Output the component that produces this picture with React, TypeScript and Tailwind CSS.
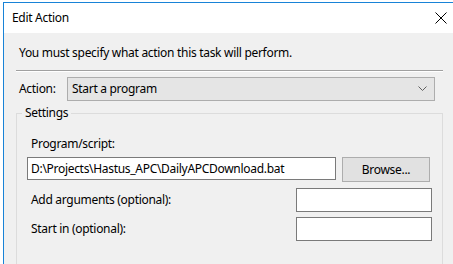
import React from "react";

const font = { fontFamily: '"Noto Sans", "Open Sans", sans-serif' };

function Chevron() {
  return (
    <svg width="9" height="6" viewBox="0 0 9 6" className="text-[#606060]">
      <path d="M0.5 0.5 L4.5 4.5 L8.5 0.5" fill="none" stroke="currentColor" strokeWidth="1" />
    </svg>
  );
}

function CloseX() {
  return (
    <svg width="12" height="12" viewBox="0 0 12 12">
      <path d="M0.5 0.5 L11.5 11.5 M11.5 0.5 L0.5 11.5" stroke="#000" strokeWidth="1" />
    </svg>
  );
}

export default function App() {
  return (
    <div
      className="w-[453px] h-[264px] overflow-hidden bg-white pt-[2px] pl-[3px] text-[12px] tracking-[-0.3px] text-black"
      style={font}
    >
      <div className="h-[262px] border-l border-t border-[#1883d7] flex flex-col">
        {/* title bar */}
        <div className="h-[30px] shrink-0 bg-white flex items-center justify-between pl-[8px] pr-[6px]">
          <span className="leading-[16px]">Edit Action</span>
          <CloseX />
        </div>

        {/* body */}
        <div className="flex-1 bg-[#f0f0f0] pl-[12px] pr-[10px]">
          <div className="mt-[12px] ml-[3px] h-[16px] leading-[16px]">
            You must specify what action this task will perform.
          </div>
          <div className="mt-[9px] border-t border-b border-t-[#a0a0a0] border-b-white" />

          <div className="mt-[5px] flex items-center h-[24px]">
            <span className="ml-[3px] w-[48px] leading-[16px]">Action:</span>
            <div className="w-[368px] h-[24px] bg-[#e5e5e5] border border-[#adadad] flex items-center justify-between pl-[4px] pr-[7px]">
              <span className="leading-[16px]">Start a program</span>
              <Chevron />
            </div>
          </div>

          <fieldset className="mt-[4px] border border-[#dcdcdc] h-[200px] pl-[10px] pr-[12px]">
            <legend className="ml-[-5px] px-[3px] leading-[16px]">Settings</legend>

            <div className="mt-[15px] ml-[4px] leading-[16px]">Program/script:</div>
            <div className="mt-[5px] flex items-start justify-between">
              <div className="w-[309px] h-[23px] bg-white border border-[#7a7a7a] flex items-center pl-[3px] leading-[16px] whitespace-nowrap overflow-hidden">
                D:\Projects\Hastus_APC\DailyAPCDownload.bat
              </div>
              <button className="w-[88px] h-[25px] bg-[#e1e1e1] border border-[#adadad] leading-[16px]">
                Browse...
              </button>
            </div>

            <div className="mt-[6px] flex items-center justify-between">
              <span className="ml-[4px] leading-[16px]">Add arguments (optional):</span>
              <div className="w-[136px] h-[24px] bg-white border border-[#7a7a7a] mr-[-2px]" />
            </div>
            <div className="mt-[5px] flex items-center justify-between">
              <span className="ml-[4px] leading-[16px]">Start in (optional):</span>
              <div className="w-[136px] h-[24px] bg-white border border-[#7a7a7a] mr-[-2px]" />
            </div>
          </fieldset>
        </div>
      </div>
    </div>
  );
}
